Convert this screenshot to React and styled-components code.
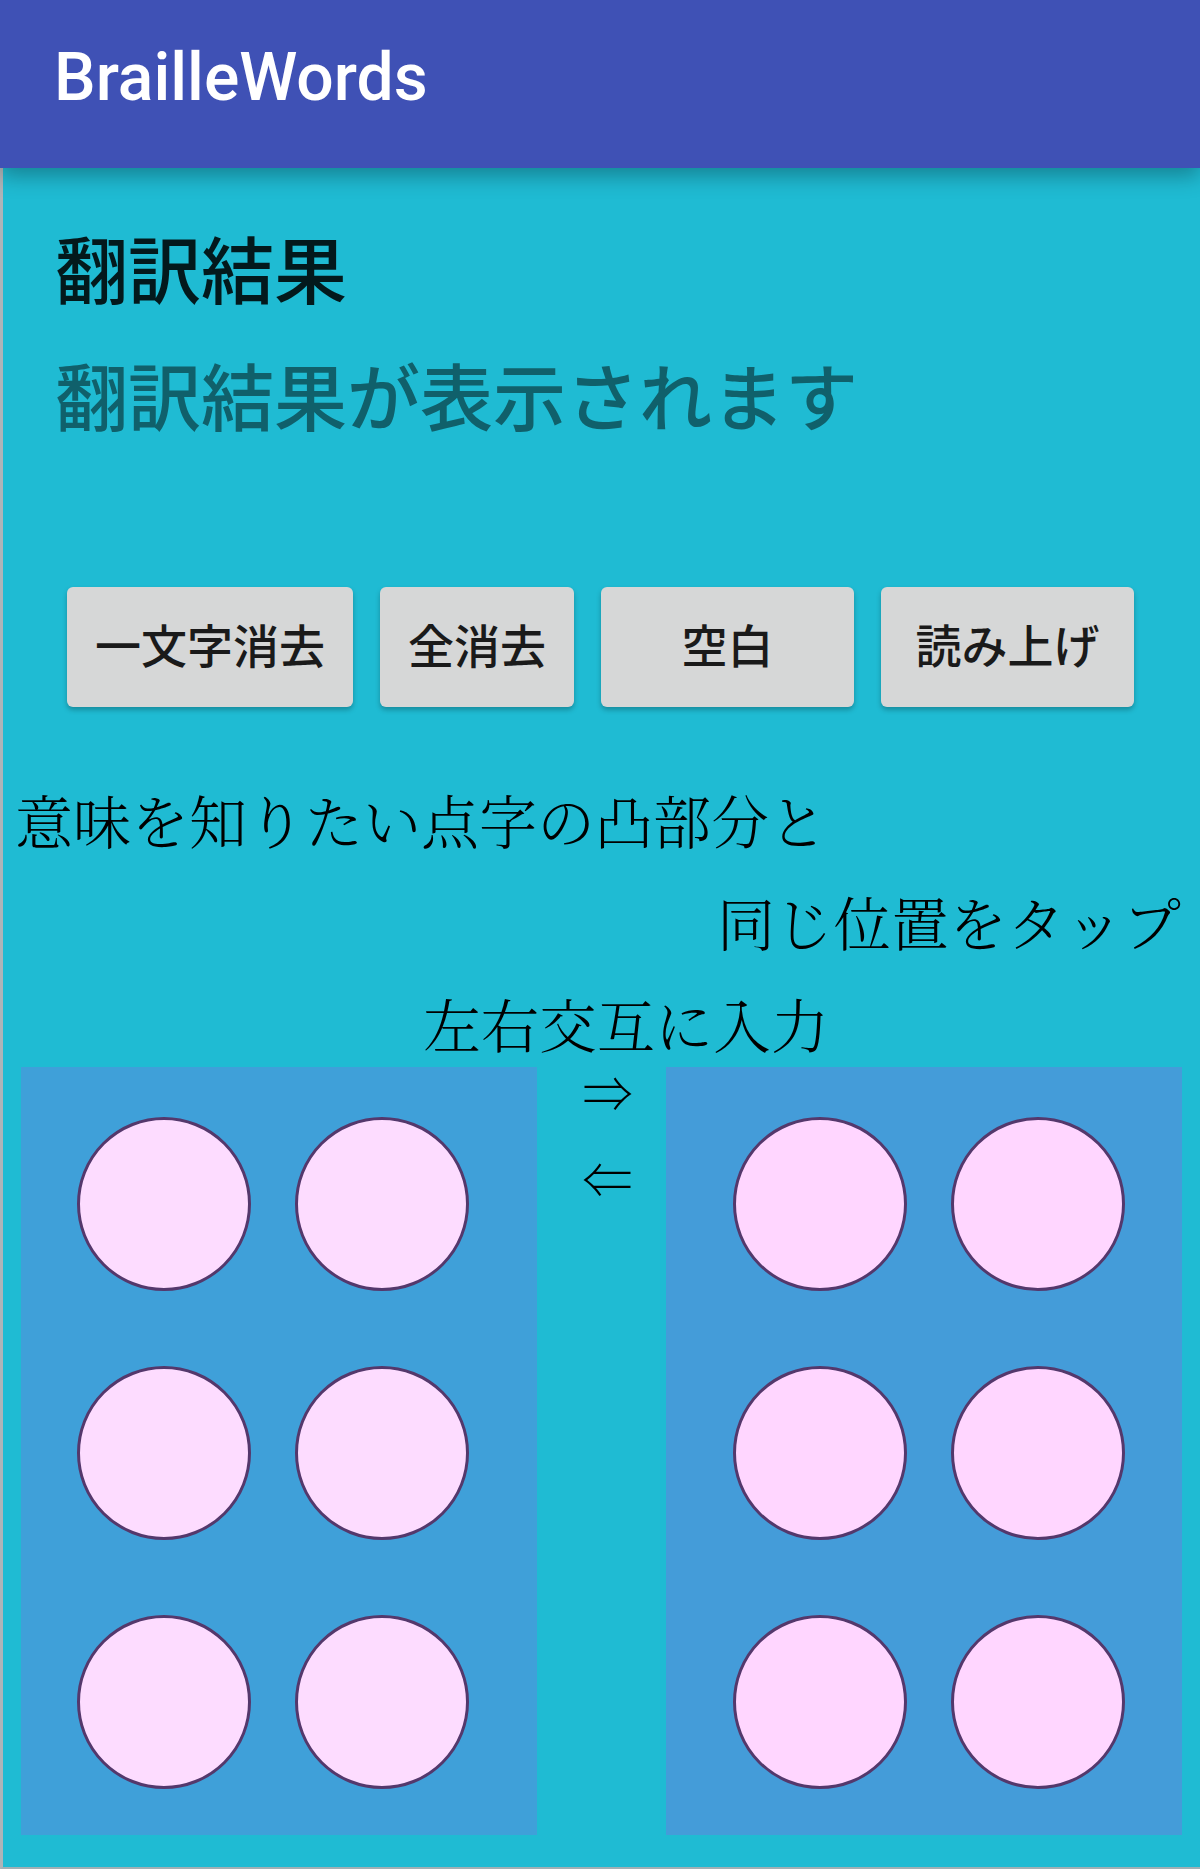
import React, { useState } from "react";
import styled, { createGlobalStyle } from "styled-components";

const GlobalStyle = createGlobalStyle`
  *, *::before, *::after { box-sizing: border-box; }
  body {
    margin: 0;
    background: #1fbbd3;
    font-family: Roboto, "Noto Sans CJK JP", sans-serif;
  }
  h1, h2, p { margin: 0; }
`;

const Screen = styled.div`
  display: flex;
  flex-direction: column;
  min-height: 100vh;
`;

const AppBar = styled.header`
  display: flex;
  align-items: center;
  z-index: 1;
  padding: 36px 54px 48px;
  background: #3f51b5;
  box-shadow: 0 8px 20px rgba(0, 0, 0, 0.3);
`;

const AppTitle = styled.h1`
  color: #fff;
  font-size: 66px;
  line-height: 84px;
  font-weight: 500;
`;

const Content = styled.main`
  display: flex;
  flex-direction: column;
  flex: 1;
  padding-bottom: 31px;
  background: #1fbbd3;
  border-left: 3px solid #aeb4b8;
  border-bottom: 2px solid #a0b0b5;
`;

const Result = styled.section`
  display: flex;
  flex-direction: column;
  gap: 27px;
  padding: 55px 52px 0;
  font-size: 73px;
  font-weight: 500;
  line-height: 100px;
`;

const ResultHeading = styled.h2`
  color: #03191c;
  font-size: inherit;
  font-weight: inherit;
`;

const ResultOutput = styled.output`
  color: #10606b;
`;

const Actions = styled.div`
  display: flex;
  gap: 27px;
  margin: 137px 66px 71px 64px;
`;

const ActionButton = styled.button`
  flex: ${(p) => (p.$grow ? "1 1 0" : "0 0 auto")};
  height: 120px;
  padding: 0 28px;
  border: 0;
  border-radius: 6px;
  background: #d6d7d7;
  color: #1a1a1a;
  box-shadow: 0 3px 5px rgba(0, 0, 0, 0.25);
  font-family: inherit;
  font-size: 46px;
  font-weight: 500;
  line-height: 60px;
  white-space: nowrap;
`;

const Guide = styled.div`
  display: flex;
  flex-direction: column;
  gap: 20px;
  padding: 0 19px 3px 12px;
  color: #000;
  font-family: "Noto Serif CJK JP", "Noto Sans CJK JP", serif;
  font-size: 58px;
  font-weight: 300;
  line-height: 82px;
`;

const GuideLine = styled.p`
  text-align: ${(p) => p.$align || "left"};
  padding-left: ${(p) => (p.$align === "center" ? "56px" : "0")};
`;

const Board = styled.div`
  display: grid;
  grid-template-columns: 1fr 129px 1fr;
  padding: 0 18px;
`;

const Cell = styled.div`
  display: grid;
  grid-template-columns: 174px 174px;
  gap: 75px 44px;
  padding: 50px 0 46px ${(p) => p.$inset}px;
  background: ${(p) => p.$tone};
`;

const Dot = styled.button`
  width: 174px;
  height: 174px;
  padding: 0;
  border: 3px solid #54386c;
  border-radius: 50%;
  background: ${(p) => (p.$raised ? "#e88bd8" : p.$tone)};
`;

const Arrows = styled.div`
  display: flex;
  flex-direction: column;
  align-items: center;
  gap: 40px;
  padding-left: 12px;
  color: #000;
  font-family: "Noto Serif CJK JP", "Liberation Serif", serif;
  font-size: 50px;
  font-weight: 400;
  line-height: 46px;
`;

function BrailleCell({ name, inset, tone, dotTone }) {
  const [raised, setRaised] = useState([]);
  const toggle = (n) =>
    setRaised((r) => (r.includes(n) ? r.filter((x) => x !== n) : [...r, n]));
  return (
    <Cell $inset={inset} $tone={tone} role="group" aria-label={name}>
      {[1, 4, 2, 5, 3, 6].map((n) => (
        <Dot
          key={n}
          type="button"
          aria-label={`${name} ${n}`}
          aria-pressed={raised.includes(n)}
          $raised={raised.includes(n)}
          $tone={dotTone}
          onClick={() => toggle(n)}
        />
      ))}
    </Cell>
  );
}

export default function App() {
  return (
    <Screen>
      <GlobalStyle />
      <AppBar>
        <AppTitle>BrailleWords</AppTitle>
      </AppBar>
      <Content>
        <Result>
          <ResultHeading id="result">翻訳結果</ResultHeading>
          <ResultOutput aria-labelledby="result">翻訳結果が表示されます</ResultOutput>
        </Result>
        <Actions>
          <ActionButton type="button">一文字消去</ActionButton>
          <ActionButton type="button">全消去</ActionButton>
          <ActionButton type="button" $grow>空白</ActionButton>
          <ActionButton type="button" $grow>読み上げ</ActionButton>
        </Actions>
        <Guide>
          <GuideLine>意味を知りたい点字の凸部分と</GuideLine>
          <GuideLine $align="right">同じ位置をタップ</GuideLine>
          <GuideLine $align="center">左右交互に入力</GuideLine>
        </Guide>
        <Board>
          <BrailleCell name="左" inset={56} tone="#3fa0d9" dotTone="#fddcff" />
          <Arrows>
            <span>⇒</span>
            <span>⇐</span>
          </Arrows>
          <BrailleCell name="右" inset={67} tone="#449cd9" dotTone="#ffd6ff" />
        </Board>
      </Content>
    </Screen>
  );
}
